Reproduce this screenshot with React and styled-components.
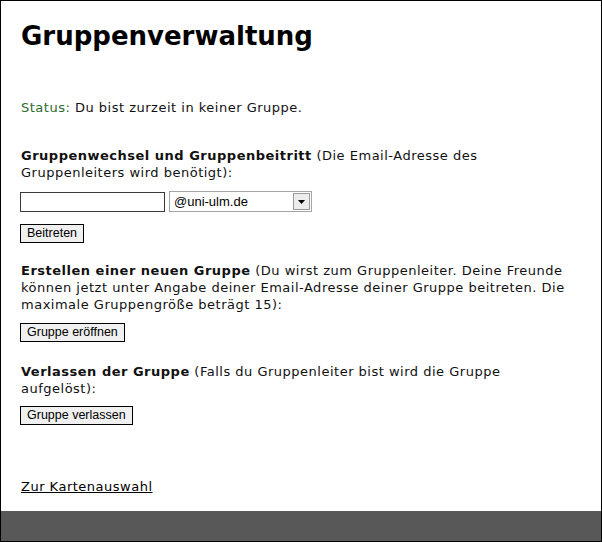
import styled, { createGlobalStyle } from 'styled-components';

const GlobalStyle = createGlobalStyle`
  html, body {
    margin: 0;
    padding: 0;
    background: #fff;
  }
`;

const Page = styled.div`
  box-sizing: border-box;
  width: 602px;
  height: 542px;
  border: 1px solid #000;
  display: flex;
  flex-direction: column;
  font-family: "DejaVu Sans", Verdana, sans-serif;
  font-size: 13px;
  line-height: 17px;
  letter-spacing: 0.5px;
  color: #111;
`;

const Main = styled.main`
  flex: 1;
  min-height: 0;
  padding: 18px 19px 0;
`;

const Title = styled.h1`
  margin: 0 0 46px 1px;
  font-size: 26px;
  line-height: 34px;
  font-weight: bold;
  letter-spacing: 0;
  color: #000;
`;

const Status = styled.p`
  margin: 0 0 31px 1px;
`;

const StatusLabel = styled.span`
  color: #2e6b2e;
`;

const Section = styled.section`
  margin-bottom: ${(p) => p.$gap ?? 19}px;
`;

const Text = styled.p`
  margin: 0 0 ${(p) => p.$after ?? 10}px 1px;
`;

const Row = styled.div`
  display: flex;
  align-items: flex-start;
  gap: 4px;
  margin-bottom: 12px;
`;

const EmailInput = styled.input`
  box-sizing: border-box;
  width: 145px;
  height: 20px;
  margin: 1px 0 0;
  border: 1px solid #3a3a3a;
  padding: 1px 3px;
  font-family: "Liberation Sans", Arial, sans-serif;
  font-size: 13px;
  background: #fff;
`;

const SelectWrap = styled.div`
  position: relative;
  width: 143px;
  height: 21px;
`;

const Select = styled.select`
  box-sizing: border-box;
  appearance: none;
  width: 100%;
  height: 100%;
  margin: 0;
  border: 1px solid #a5a5a5;
  border-radius: 0;
  padding: 0 20px 0 4px;
  background: #fff;
  font-family: "Liberation Sans", Arial, sans-serif;
  font-size: 13px;
  letter-spacing: 0;
  color: #000;
`;

const Arrow = styled.span`
  position: absolute;
  top: 2px;
  right: 2px;
  width: 15px;
  height: 15px;
  border: 1px solid #9a9a9a;
  background: #ececec;
  display: flex;
  align-items: center;
  justify-content: center;
  pointer-events: none;
`;

const Button = styled.button`
  box-sizing: border-box;
  height: 19px;
  margin: 0;
  padding: 0 6px;
  border: 1px solid #000;
  border-radius: 0;
  background: #f0f0f0;
  font-family: "Liberation Sans", Arial, sans-serif;
  font-size: 12.5px;
  line-height: 17px;
  letter-spacing: 0;
  color: #000;
`;

const BackLink = styled.a`
  display: inline-block;
  margin: 53px 0 0 1px;
  color: #000;
  text-decoration: underline;
`;

const Footer = styled.footer`
  flex: none;
  height: 30px;
  background: #585858;
`;

export default function App() {
  return (
    <>
      <GlobalStyle />
      <Page>
        <Main>
          <Title>Gruppenverwaltung</Title>
          <Status>
            <StatusLabel>Status:</StatusLabel> Du bist zurzeit in keiner Gruppe.
          </Status>

          <Section>
            <Text>
              <b>Gruppenwechsel und Gruppenbeitritt</b> (Die Email-Adresse des
              <br />
              Gruppenleiters wird benötigt):
            </Text>
            <Row>
              <EmailInput type="text" />
              <SelectWrap>
                <Select defaultValue="uni">
                  <option value="uni">@uni-ulm.de</option>
                </Select>
                <Arrow>
                  <svg width="7" height="4" viewBox="0 0 7 4">
                    <path d="M0 0h7L3.5 4z" fill="#000" />
                  </svg>
                </Arrow>
              </SelectWrap>
            </Row>
            <Button>Beitreten</Button>
          </Section>

          <Section $gap={21}>
            <Text>
              <b>Erstellen einer neuen Gruppe</b> (Du wirst zum Gruppenleiter. Deine Freunde
              <br />
              können jetzt unter Angabe deiner Email-Adresse deiner Gruppe beitreten. Die
              <br />
              maximale Gruppengröße beträgt 15):
            </Text>
            <Button>Gruppe eröffnen</Button>
          </Section>

          <Section $gap={0}>
            <Text $after={9}>
              <b>Verlassen der Gruppe</b> (Falls du Gruppenleiter bist wird die Gruppe
              <br />
              aufgelöst):
            </Text>
            <Button>Gruppe verlassen</Button>
          </Section>

          <BackLink href="#">Zur Kartenauswahl</BackLink>
        </Main>
        <Footer />
      </Page>
    </>
  );
}
